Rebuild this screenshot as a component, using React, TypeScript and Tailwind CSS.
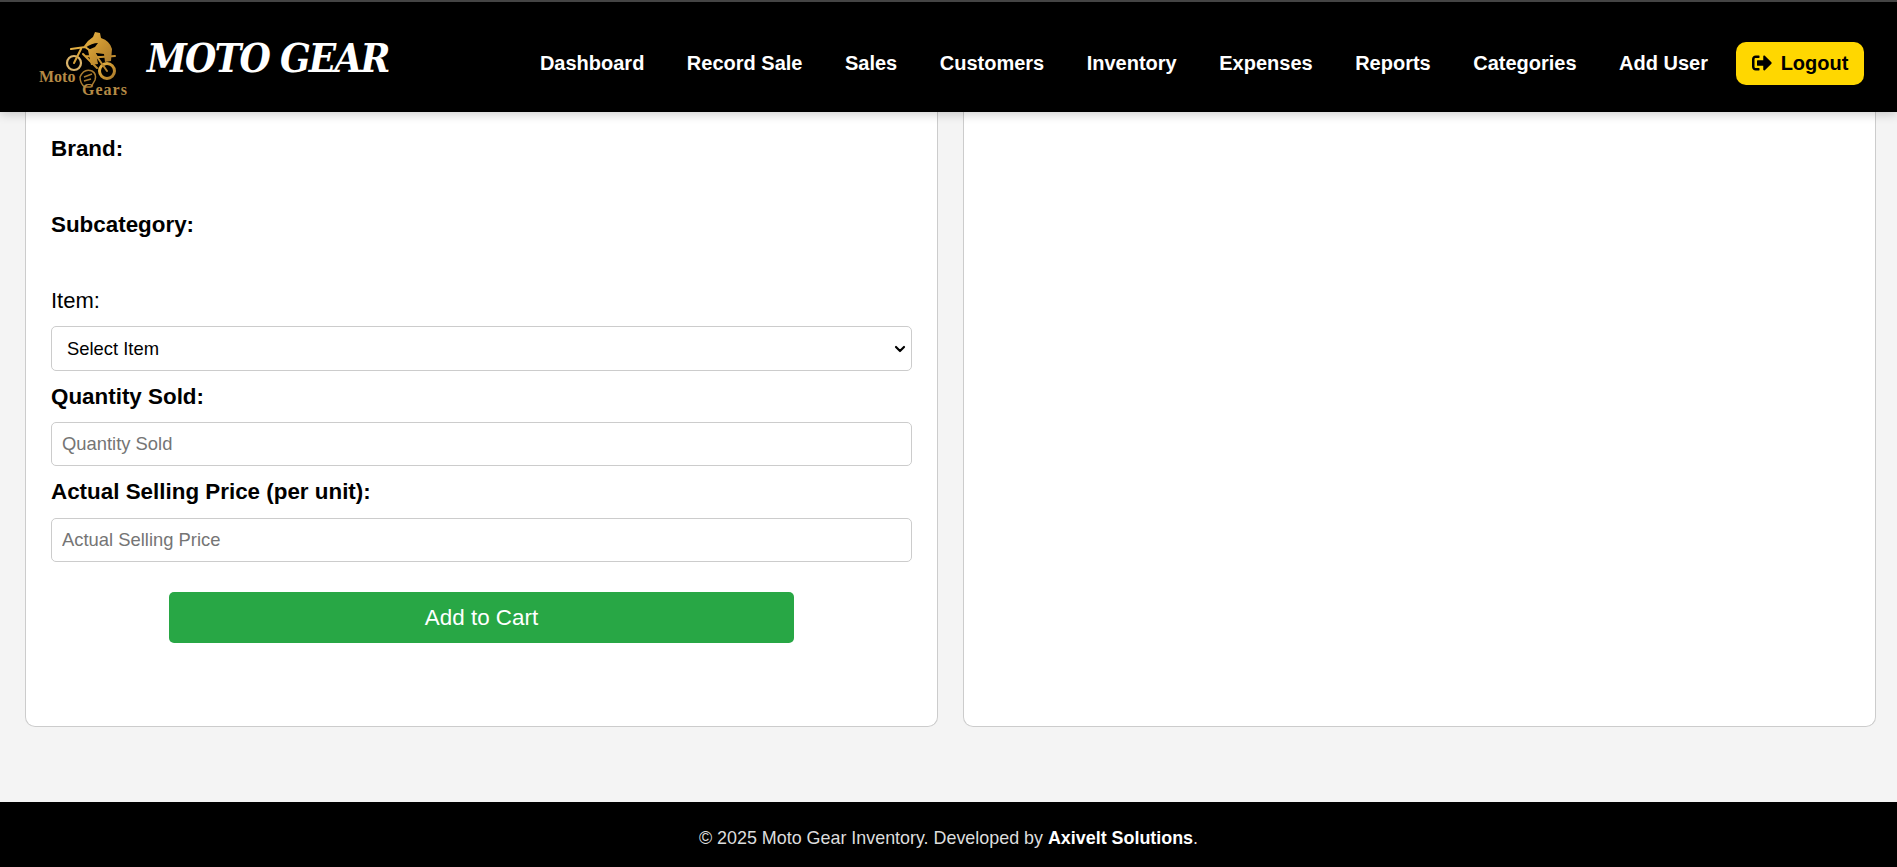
import { FaSignOutAlt } from 'react-icons/fa';
import { ChevronDown } from 'lucide-react';

const NAV = ['Dashboard', 'Record Sale', 'Sales', 'Customers', 'Inventory', 'Expenses', 'Reports', 'Categories', 'Add User'];

function Logo() {
  return (
    <svg width="100" height="72" viewBox="0 0 100 72" className="shrink-0">
      <defs>
        <linearGradient id="gold" x1="0" y1="0" x2="1" y2="1">
          <stop offset="0" stopColor="#e8b547" />
          <stop offset="0.55" stopColor="#c8922f" />
          <stop offset="1" stopColor="#a87a2e" />
        </linearGradient>
      </defs>
      <g transform="translate(0 3)">
        {/* wheels */}
        <circle cx="39" cy="33" r="7" fill="none" stroke="#d9b36a" strokeWidth="2.2" />
        <circle cx="72" cy="41" r="7.5" fill="none" stroke="url(#gold)" strokeWidth="3" />
        {/* frame and forks */}
        <path d="M39 33 L46 19 M36 19 L50 17 L60 24 L72 41 M50 26 L66 27 L80 26 M48 24 L62 38" fill="none" stroke="url(#gold)" strokeWidth="2" strokeLinecap="round" />
        {/* rider */}
        <path d="M58 7 L60 2 L65 3 L66 8 Q75 11 77 19 L76 31 L70 32 L69 24 L61 23 L63 34 L56 35 L53 20 L60 17 L63 13 Q57 13 50 18 L49 16 Q53 10 58 7 Z" fill="url(#gold)" />
        {/* helmet */}
        <path d="M45 47 Q49 38 57 41 Q62 44 60 50 L56 57 L50 57 Q45 54 45 47 Z M49 47 L57 44 M49 51 L56 49" fill="none" stroke="#a87a2e" strokeWidth="1.5" />
      </g>
      <text x="4" y="55" fontFamily="'Liberation Serif', serif" fontWeight="700" fontSize="16" fill="#b58a45">Moto</text>
      <text x="47" y="68" fontFamily="'Liberation Serif', serif" fontWeight="700" fontSize="16" letterSpacing="1" fill="#b58a45">Gears</text>
    </svg>
  );
}

function Field({ label, children }: { label: string; children?: React.ReactNode }) {
  return (
    <div>
      <label className="block text-[22.4px] leading-[26px] font-bold text-black">{label}</label>
      {children}
    </div>
  );
}

export default function App() {
  return (
    <div className="min-h-[867px] flex flex-col bg-[#f4f4f4] font-['Liberation_Sans',Arial,sans-serif] text-black">
      <header className="relative z-10 h-[112px] shrink-0 flex items-center bg-black border-t-2 border-[#444] shadow-[0_2px_10px_rgba(0,0,0,0.2)] pt-[12px] pl-[35px] pr-[33px]">
        <Logo />
        <span className="ml-[12px] mb-[11px] text-[40px] leading-none font-bold italic text-white font-['DejaVu_Serif',serif] tracking-[-2px] scale-x-[0.9] origin-left">MOTO GEAR</span>
        <nav className="ml-auto flex items-center">
          <div className="flex items-center gap-[42.5px]">
            {NAV.map(n => (
              <a key={n} className="text-[20px] font-bold text-white whitespace-nowrap">{n}</a>
            ))}
          </div>
          <button className="ml-[28px] h-[43px] w-[128px] flex items-center justify-center gap-[9px] rounded-[10px] bg-[#ffd700] text-[20px] font-bold text-black">
            <FaSignOutAlt size={20} />
            Logout
          </button>
        </nav>
      </header>

      <main className="flex-1 flex gap-[25px] pl-[25px] pr-[21px] pb-[75px] items-stretch">
        <section className="w-[913px] shrink-0 h-[615px] bg-white border border-t-0 border-[#ccc] rounded-b-[10px] px-[25px] pt-[24px]">
          <div className="flex flex-col gap-[50px]">
            <Field label="Brand:" />
            <Field label="Subcategory:" />
          </div>
          <label className="block mt-[50px] text-[22px] leading-[26px] font-normal">Item:</label>
          <div className="relative mt-[12px]">
            <select className="block w-full h-[45px] pl-[15px] pr-[30px] appearance-none text-[18.4px] bg-white border border-[#ccc] rounded-[5px]">
              <option>Select Item</option>
            </select>
            <ChevronDown size={16} strokeWidth={3.2} className="absolute right-[4px] top-[15px] pointer-events-none text-black" />
          </div>
          <div className="mt-[13px]">
            <Field label="Quantity Sold:">
              <input placeholder="Quantity Sold" className="block mt-[12px] w-full h-[44px] px-[10px] text-[18.4px] border border-[#ccc] rounded-[5px] placeholder:text-[#757575]" />
            </Field>
          </div>
          <div className="mt-[13px]">
            <Field label="Actual Selling Price (per unit):">
              <input placeholder="Actual Selling Price" className="block mt-[13px] w-full h-[44px] px-[10px] text-[18.4px] border border-[#ccc] rounded-[5px] placeholder:text-[#757575]" />
            </Field>
          </div>
          <button className="block mx-auto mt-[30px] w-[625px] h-[51px] rounded-[5px] bg-[#28a745] text-white text-[22.4px]">Add to Cart</button>
        </section>
        <section className="w-[913px] shrink-0 h-[615px] bg-white border border-t-0 border-[#ccc] rounded-b-[10px]" />
      </main>

      <footer className="h-[65px] shrink-0 flex items-center justify-center pt-[8px] bg-black text-[#ddd] text-[17.9px]">
        <p>© 2025 Moto Gear Inventory. Developed by <strong className="text-white font-bold">Axivelt Solutions</strong>.</p>
      </footer>
    </div>
  );
}
